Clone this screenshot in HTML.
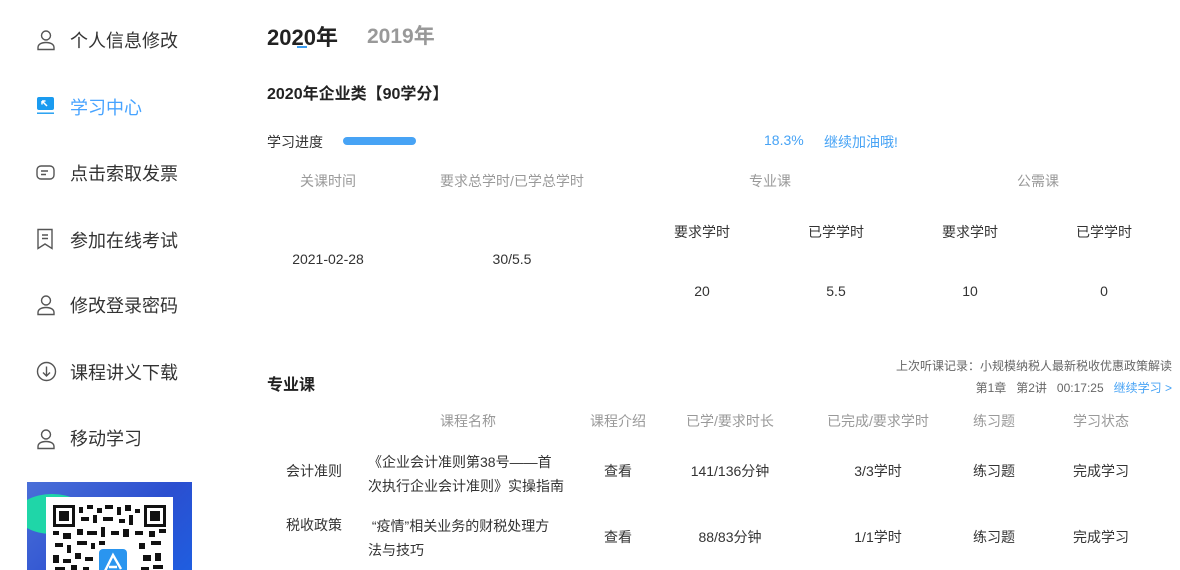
<!DOCTYPE html>
<html><head><meta charset="utf-8"><style>
*{margin:0;padding:0;box-sizing:border-box}
body{width:1180px;height:570px;overflow:hidden;background:#fff;position:relative;font-family:"Liberation Sans","Noto Sans CJK SC",sans-serif;color:#333}
.a{position:absolute;white-space:nowrap}
.c{position:absolute;white-space:nowrap;width:240px;text-align:center;font-size:14px;color:#333}
.g{color:#999}
.nav{position:absolute;left:70px;font-size:18px;color:#333}
.ic{position:absolute;left:36px}
</style></head><body>
<svg class="ic" style="top:29px" width="20" height="22" viewBox="0 0 20 22" fill="none" stroke="#555" stroke-width="1.4"><circle cx="10" cy="6.5" r="4.5"/><path d="M2 20.5v-2c0-3 3-5 8-5s8 2 8 5v2z"/></svg>
<div class="nav" style="top:27px">个人信息修改</div>
<svg class="ic" style="top:96px" width="20" height="20" viewBox="0 0 20 20"><rect x="1" y="1" width="17" height="13" rx="2" fill="#1a9bf0"/><path d="M6 5h3.5M6 5v3.5M6 5l5 5" stroke="#fff" stroke-width="1.5"/><rect x="1" y="16.5" width="17" height="1.4" fill="#1a9bf0"/></svg>
<div class="nav" style="top:94px;color:#47a3ff">学习中心</div>
<svg class="ic" style="top:164px" width="20" height="18" viewBox="0 0 20 18" fill="none" stroke="#555" stroke-width="1.4"><rect x="1" y="2" width="17" height="13" rx="4"/><path d="M5 7h7M5 10.5h5"/></svg>
<div class="nav" style="top:160px">点击索取发票</div>
<svg class="ic" style="top:228px" width="18" height="22" viewBox="0 0 18 22" fill="none" stroke="#555" stroke-width="1.4"><path d="M2 1.5h14v19l-7-4.5-7 4.5z"/><path d="M6 7h6M6 10.5h6"/></svg>
<div class="nav" style="top:227px">参加在线考试</div>
<svg class="ic" style="top:294px" width="20" height="22" viewBox="0 0 20 22" fill="none" stroke="#555" stroke-width="1.4"><circle cx="10" cy="6.5" r="4.5"/><path d="M2 20.5v-2c0-3 3-5 8-5s8 2 8 5v2z"/></svg>
<div class="nav" style="top:292px">修改登录密码</div>
<svg class="ic" style="top:361px" width="21" height="21" viewBox="0 0 21 21" fill="none" stroke="#555" stroke-width="1.4"><circle cx="10.5" cy="10.5" r="9"/><path d="M10.5 5.5v9M7 11.5l3.5 3.5 3.5-3.5"/></svg>
<div class="nav" style="top:359px">课程讲义下载</div>
<svg class="ic" style="top:428px" width="20" height="22" viewBox="0 0 20 22" fill="none" stroke="#555" stroke-width="1.4"><circle cx="10" cy="6.5" r="4.5"/><path d="M2 20.5v-2c0-3 3-5 8-5s8 2 8 5v2z"/></svg>
<div class="nav" style="top:425px">移动学习</div>
<div class="a" style="left:27px;top:482px;width:165px;height:88px;background:linear-gradient(135deg,#4a6fd8,#2b4fd0 60%,#1f5ee0);overflow:hidden">
<div style="position:absolute;left:-10px;top:12px;width:70px;height:40px;border-radius:50%;background:#1fd6a8"></div>
<div style="position:absolute;left:19px;top:15px;width:127px;height:80px;background:#fff"></div>
<svg style="position:absolute;left:26px;top:23px" width="113" height="70" viewBox="0 0 113 70">
<g fill="#111">
<rect x="0" y="0" width="22" height="22"/><rect x="91" y="0" width="22" height="22"/>
<rect x="26" y="2" width="4" height="6"/><rect x="34" y="0" width="6" height="4"/><rect x="44" y="3" width="5" height="5"/><rect x="52" y="0" width="8" height="4"/><rect x="64" y="2" width="4" height="8"/><rect x="72" y="0" width="6" height="6"/><rect x="82" y="4" width="5" height="4"/>
<rect x="28" y="12" width="8" height="4"/><rect x="40" y="10" width="4" height="8"/><rect x="50" y="12" width="10" height="4"/><rect x="66" y="14" width="6" height="4"/><rect x="76" y="10" width="4" height="10"/>
<rect x="0" y="26" width="6" height="4"/><rect x="10" y="28" width="8" height="6"/><rect x="24" y="24" width="6" height="6"/><rect x="34" y="26" width="10" height="4"/><rect x="48" y="22" width="4" height="10"/><rect x="58" y="26" width="8" height="4"/><rect x="70" y="24" width="6" height="8"/><rect x="82" y="26" width="8" height="4"/><rect x="96" y="26" width="6" height="6"/><rect x="106" y="24" width="7" height="4"/>
<rect x="2" y="38" width="8" height="4"/><rect x="14" y="40" width="4" height="8"/><rect x="24" y="36" width="10" height="4"/><rect x="38" y="38" width="4" height="6"/><rect x="46" y="36" width="6" height="4"/><rect x="86" y="38" width="6" height="6"/><rect x="98" y="36" width="10" height="4"/>
<rect x="0" y="50" width="6" height="8"/><rect x="10" y="54" width="8" height="4"/><rect x="22" y="48" width="6" height="6"/><rect x="32" y="52" width="8" height="4"/><rect x="90" y="50" width="8" height="6"/><rect x="102" y="48" width="6" height="8"/>
<rect x="2" y="62" width="10" height="4"/><rect x="18" y="60" width="6" height="8"/><rect x="30" y="62" width="6" height="4"/><rect x="88" y="62" width="8" height="6"/><rect x="100" y="60" width="10" height="4"/>
</g>
<g fill="#fff"><rect x="3" y="3" width="16" height="16"/><rect x="94" y="3" width="16" height="16"/></g>
<g fill="#111"><rect x="6" y="6" width="10" height="10"/><rect x="97" y="6" width="10" height="10"/></g>
<rect x="46" y="44" width="28" height="28" rx="4" fill="#2a95ef"/>
<path d="M52 66l8-16 8 14M56 62h8" stroke="#fff" stroke-width="2.4" fill="none"/>
</svg></div>
<div class="a" style="left:267px;top:20px;font-size:22px;font-weight:bold;color:#222">2020年</div>
<div class="a" style="left:297px;top:46px;width:10px;height:2px;background:#3a9bef"></div>
<div class="a" style="left:367px;top:20px;font-size:21px;font-weight:bold;color:#999">2019年</div>
<div class="a" style="left:267px;top:80px;font-size:16px;font-weight:bold;color:#222">2020年企业类【90学分】</div>
<div class="a" style="left:267px;top:132px;font-size:14px">学习进度</div>
<div class="a" style="left:343px;top:137px;width:73px;height:8px;border-radius:4px;background:#47a3f5"></div>
<div class="a" style="left:764px;top:132px;font-size:14px;color:#47a3f5">18.3%</div>
<div class="a" style="left:824px;top:132px;font-size:14px;color:#47a3f5">继续加油哦!</div>
<div class="c g" style="left:208px;top:171px">关课时间</div>
<div class="c g" style="left:392px;top:171px">要求总学时/已学总学时</div>
<div class="c g" style="left:650px;top:171px">专业课</div>
<div class="c g" style="left:918px;top:171px">公需课</div>
<div class="c" style="left:582px;top:222px">要求学时</div>
<div class="c" style="left:716px;top:222px">已学学时</div>
<div class="c" style="left:850px;top:222px">要求学时</div>
<div class="c" style="left:984px;top:222px">已学学时</div>
<div class="c" style="left:208px;top:251px">2021-02-28</div>
<div class="c" style="left:392px;top:251px">30/5.5</div>
<div class="c" style="left:582px;top:283px">20</div>
<div class="c" style="left:716px;top:283px">5.5</div>
<div class="c" style="left:850px;top:283px">10</div>
<div class="c" style="left:984px;top:283px">0</div>
<div class="a" style="left:267px;top:371px;font-size:16px;font-weight:bold;color:#222">专业课</div>
<div class="a" style="right:8px;top:357px;font-size:12px;color:#666">上次听课记录：小规模纳税人最新税收优惠政策解读</div>
<div class="a" style="right:8px;top:379px;font-size:12px;color:#666">第1章&nbsp;&nbsp;&nbsp;第2讲&nbsp;&nbsp;&nbsp;00:17:25&nbsp;&nbsp;&nbsp;<span style="color:#47a3f5">继续学习 &gt;</span></div>
<div class="c g" style="left:348px;top:411px">课程名称</div>
<div class="c g" style="left:498px;top:411px">课程介绍</div>
<div class="c g" style="left:610px;top:411px">已学/要求时长</div>
<div class="c g" style="left:758px;top:411px">已完成/要求学时</div>
<div class="c g" style="left:874px;top:411px">练习题</div>
<div class="c g" style="left:981px;top:411px">学习状态</div>
<div class="c" style="left:194px;top:461px">会计准则</div>
<div class="a" style="left:368px;top:450px;font-size:14px;line-height:24px">《企业会计准则第38号——首<br>次执行企业会计准则》实操指南</div>
<div class="c" style="left:498px;top:461px">查看</div>
<div class="c" style="left:610px;top:461px">141/136分钟</div>
<div class="c" style="left:758px;top:461px">3/3学时</div>
<div class="c" style="left:874px;top:461px">练习题</div>
<div class="c" style="left:981px;top:461px">完成学习</div>
<div class="c" style="left:194px;top:515px">税收政策</div>
<div class="a" style="left:368px;top:514px;font-size:14px;line-height:24px">&nbsp;“疫情”相关业务的财税处理方<br>法与技巧</div>
<div class="c" style="left:498px;top:527px">查看</div>
<div class="c" style="left:610px;top:527px">88/83分钟</div>
<div class="c" style="left:758px;top:527px">1/1学时</div>
<div class="c" style="left:874px;top:527px">练习题</div>
<div class="c" style="left:981px;top:527px">完成学习</div>
</body></html>
